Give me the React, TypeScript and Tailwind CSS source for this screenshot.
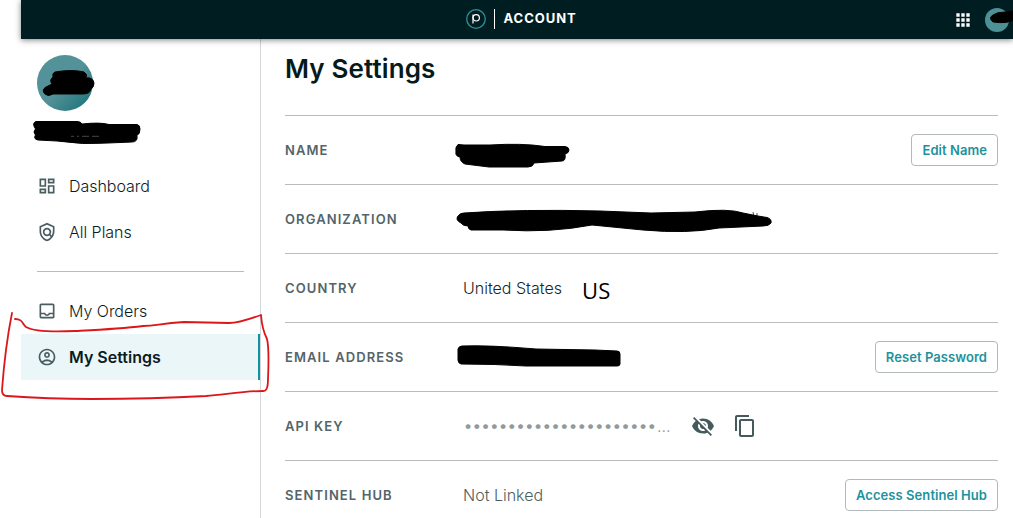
import type { ReactNode } from "react";
import {
  MdApps,
  MdContentCopy,
  MdOutlineAccountCircle,
  MdOutlineDashboard,
  MdOutlineInbox,
  MdOutlinePolicy,
  MdVisibilityOff,
} from "react-icons/md";

function NavItem({ icon, label, active }: { icon: ReactNode; label: string; active?: boolean }) {
  return (
    <a
      className={
        active
          ? "flex h-[46px] items-center gap-3 border-r-2 border-[#0f93a1] bg-[#eaf6f8] pl-4 text-[16px] font-semibold text-[#0b1c1e]"
          : "flex h-[46px] items-center gap-3 pl-4 text-[16px] font-[350] tracking-[-0.03px] text-[#0b1c1e]"
      }
    >
      <span className="text-[20px] text-[#4b5c60]">{icon}</span>
      {label}
    </a>
  );
}

function Row({ label, action, children }: { label: string; action?: string; children?: ReactNode }) {
  return (
    <div className="flex h-[69px] shrink-0 items-center border-t border-[#b9bdbe]">
      <div className="w-[178px] shrink-0 pt-0.5 text-[13px] font-semibold tracking-[1.1px] text-[#53646a]">{label}</div>
      <div className="flex flex-1 items-center text-[16px] font-[350] text-[#14282b]">{children}</div>
      {action && (
        <button className="h-8 rounded-[4px] border border-[#b3b9bb] px-[10px] pt-0.5 text-[13px] font-semibold tracking-[0.06px] text-[#1d929d]">
          {action}
        </button>
      )}
    </div>
  );
}

function Ink() {
  return (
    <svg className="pointer-events-none absolute inset-0" width="1013" height="518" fill="none">
      <g fill="#000" stroke="#000" strokeLinejoin="round">
        <path d="M55 72Q72 69 84 72Q88 74 86 78Q93 77 94 83Q94 87 91 89Q90 94 83 94H53Q48 97 45 94Q41 90 46 87L52 84Q49 80 53 77Q52 73 55 72Z" />
        <path d="M36 121.5H77Q81 121.5 82 124Q100 122 109 124.500H137Q140 125 140 129Q140 134 137 135.500Q138 142 132 142L108 143Q83 145 57 141L38 140Q33 139 35.500 135Q32.500 132 35.500 129Q31.500 123 36 121.5Z" />
        <path d="M458 144.500L464 145L490 145Q522 143 545 146.500H565Q569 147 569 150Q569 153 565 154Q566 161 562 161L534 163Q533 167 528 167H489L465 164Q460 162 460 157Q455 156 456 152Q455 147 458 144.500Z" />
        <path d="M464 213Q523 209 600 211L651 213L695 212Q728 208 743 213L758 216L767 217.500Q772 219 771 223Q769 226 763 226L719 228Q688 234 643 230L592 225Q550 233 504 230L471 230Q468 229 468 226Q463 226 461 223Q455 220 458 216Q460 213 464 213Z" />
        <path d="M462 346Q490 345 536 349L595 350L617 351Q620 351 620 354V364Q620 366 617 366H526Q495 364 461 364Q458 363 458 360V349Q459 346 462 346Z" />
        <path d="M993 15Q997 12 1005 12L1013 11V20Q1007 24 993 22Q988 18 993 15Z" />
      </g>
      <path d="M71 136.300H74M77 136.300H79M82 136.300H89M92 136.300H99" stroke="#777" strokeWidth=".6" />
      <path d="M754 217L753 212M757 217L757 213" stroke="#000" strokeWidth=".7" />
      <path
        d="M12 313C8 333 4 363 2 390Q2 396 7 396Q48 399 92 399Q151 399 206 396C228 394 246 391 263 391Q268 392 268 379C269 356 268 343 267 339Q262 329 261 315C250 319 238 323 229 323L184 322C160 323 157 326 143 326C119 329 95 330 75 331C55 332 35 332 26 327C22 324 23 319 15 319"
        stroke="#db171c"
        strokeWidth="1.8"
        strokeLinecap="round"
        strokeLinejoin="round"
      />
    </svg>
  );
}

export default function App() {
  return (
    <div className="relative h-[518px] w-[1013px] overflow-hidden bg-white pl-[21px] font-['Inter',sans-serif]">
      <header className="relative flex h-[39px] items-center bg-[#001e21] shadow-[0_1px_6px_rgba(0,0,0,0.5)]">
        <div className="flex flex-1 items-center pb-0.5 pl-[445px]">
          <svg width="20" height="20" viewBox="0 0 20 20" fill="none">
            <circle cx="10" cy="10" r="9.3" stroke="#2b9299" strokeWidth="1.3" />
            <path d="M7 14.500V5.500" stroke="#fff" strokeWidth="1.2" />
            <circle cx="10.200" cy="8.800" r="3.200" stroke="#fff" strokeWidth="1.2" />
          </svg>
          <span className="ml-[8px] h-5 w-px bg-white" />
          <span className="ml-[8.5px] text-[13px] font-bold tracking-[0.95px] text-white">ACCOUNT</span>
        </div>
        <MdApps className="mr-3 text-[20px] text-white" />
        <span className="mr-[4px] h-6 w-6 shrink-0 rounded-full bg-[#4d9197]" />
      </header>
      <div className="flex h-[479px]">
        <aside className="w-[240px] shrink-0 border-r border-[#d3d7d8]">
          <div className="px-4 pt-4">
            <div className="h-14 w-14 rounded-full bg-linear-to-br from-[#539298] from-50% to-[#006f77]" />
          </div>
          <nav className="mt-[52px]">
            <NavItem icon={<MdOutlineDashboard />} label="Dashboard" />
            <NavItem icon={<MdOutlinePolicy />} label="All Plans" />
            <hr className="mx-4 mt-4 mb-4 border-[#b9bdbe]" />
            <NavItem icon={<MdOutlineInbox />} label="My Orders" />
            <NavItem icon={<MdOutlineAccountCircle />} label="My Settings" active />
          </nav>
        </aside>
        <main className="flex flex-1 flex-col pr-[15px] pl-6">
          <h1 className="h-[76px] shrink-0 pt-3 text-[26px] leading-9 font-semibold tracking-[0.12px] text-[#061a1c]">My Settings</h1>
          <Row label="NAME" action="Edit Name" />
          <Row label="ORGANIZATION" />
          <Row label="COUNTRY">
            United States
            <span className="ml-5 pt-1 font-['Open_Sans',sans-serif] text-[22px] leading-6 font-medium tracking-[0.2px] text-black">US</span>
          </Row>
          <Row label="EMAIL ADDRESS" action="Reset Password" />
          <Row label="API KEY">
            <span className="flex w-[208px] items-center whitespace-nowrap text-[#929a9c]">
              <span className="w-[194px] text-[18px] leading-6 tracking-[-1.37px]">••••••••••••••••••••••</span>
              <span>…</span>
            </span>
            <MdVisibilityOff className="ml-5 text-[24px] text-[#465a5e]" />
            <MdContentCopy className="ml-[18px] text-[24px] text-[#465a5e]" />
          </Row>
          <Row label="SENTINEL HUB" action="Access Sentinel Hub">
            <span className="text-[#4d5f63]">Not Linked</span>
          </Row>
        </main>
      </div>
      <Ink />
    </div>
  );
}
